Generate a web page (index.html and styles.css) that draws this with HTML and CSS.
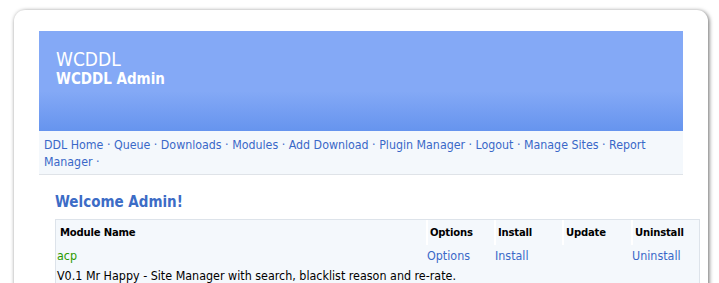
FILE: index.html
```html
<!DOCTYPE html>
<html lang="en">
<head>
  <meta charset="UTF-8" />
  <title>WCDDL Admin</title>
  <link rel="stylesheet" href="styles.css">
</head>
<body>
  <div class="wrapper">
    <div class="header">
      <div class="site-title">WCDDL</div>
      <div class="site-sub">WCDDL Admin</div>
    </div>

    <div class="nav">
      <a href="#">DDL Home</a> &middot;
      <a href="#">Queue</a> &middot;
      <a href="#">Downloads</a> &middot;
      <a href="#">Modules</a> &middot;
      <a href="#">Add Download</a> &middot;
      <a href="#">Plugin Manager</a> &middot;
      <a href="#">Logout</a> &middot;
      <a href="#">Manage Sites</a> &middot;
      <a href="#">Report Manager</a> &middot;
    </div>

    <div class="content">
      <h2 class="welcome">Welcome Admin!</h2>

      <table class="modules">
        <tr>
          <th class="name-col">Module Name</th>
          <th class="opt-col">Options</th>
          <th class="inst-col">Install</th>
          <th class="upd-col">Update</th>
          <th class="uninst-col">Uninstall</th>
        </tr>
        <tr>
          <td class="mod-name">acp</td>
          <td><a href="#">Options</a></td>
          <td><a href="#">Install</a></td>
          <td></td>
          <td><a href="#">Uninstall</a></td>
        </tr>
        <tr>
          <td colspan="5" class="mod-desc">V0.1 Mr Happy - Site Manager with search, blacklist reason and re-rate.</td>
        </tr>
      </table>
    </div>
  </div>
</body>
</html>
```

FILE: styles.css
```css
body {
  margin: 0;
  padding: 10px 11px 0 14px;
  background: #fff;
  font-family: 'DejaVu Sans Condensed', 'DejaVu Sans', sans-serif;
  font-size: 12.4px;
  color: #000;
}

a {
  color: #3a68c8;
  text-decoration: none;
}

.wrapper {
  background: #fff;
  border-radius: 11px;
  box-shadow: 1px 1px 4px rgba(0, 0, 0, 0.6);
  padding: 21px 25px 40px 25px;
}

.header {
  height: 100px;
  background: linear-gradient(to bottom, #84a9f6 0%, #84a9f6 60%, #6694ee 100%);
  color: #fff;
  padding: 18px 17px 0 17px;
  box-sizing: border-box;
}

.site-title {
  font-size: 19px;
  line-height: 20px;
}

.site-sub {
  font-size: 15px;
  font-weight: bold;
  line-height: 16px;
  margin-top: 2px;
}

.nav {
  background: #f4f8fc;
  border-bottom: 1px solid #dfe3e8;
  padding: 6px 5px 3px 5px;
  line-height: 17px;
  font-size: 12.3px;
  color: #3a68c8;
}

.content {
  padding: 0 0 0 16px;
}

.welcome {
  margin: 18px 0 8px 0;
  font-size: 15px;
  color: #3c6cc6;
}

.modules {
  width: 645px;
  border: 1px solid #dde3ea;
  background: #f4f8fc;
  border-collapse: separate;
  border-spacing: 0;
  table-layout: fixed;
}

.modules th,
.modules td {
  box-sizing: border-box;
}

.modules th {
  text-align: left;
  font-weight: bold;
  font-size: 11.2px;
  letter-spacing: -0.2px;
  padding: 0 2px;
  height: 25px;
  border-left: 2px solid #fff;
}

.modules th.name-col {
  border-left: none;
  padding-left: 4px;
  width: 370px;
}

.modules th.opt-col { width: 68px; }
.modules th.inst-col { width: 68px; }
.modules th.upd-col { width: 69px; }
.modules th.uninst-col { width: 68px; }

.modules td {
  padding: 0 1px;
  height: 20px;
}

.mod-name {
  color: #2c9a00;
}

.mod-desc {
  padding-top: 1px;
}
```
